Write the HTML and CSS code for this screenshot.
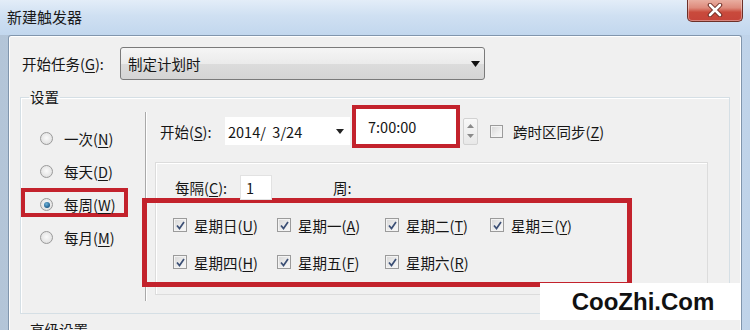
FILE: index.html
```html
<!DOCTYPE html>
<html lang="zh-CN">
<head>
<meta charset="utf-8">
<title>新建触发器</title>
<link rel="stylesheet" href="styles.css">
</head>
<body>
<div class="window">
  <div class="titlebar">
    <span class="title">新建触发器</span>
    <div class="close">
      <svg width="16" height="14" viewBox="0 0 16 14"><path d="M3 2 L13 12 M13 2 L3 12" stroke="#6b2a22" stroke-width="4.5" stroke-linecap="round"/><path d="M3 2 L13 12 M13 2 L3 12" stroke="#ffffff" stroke-width="2.6" stroke-linecap="round"/></svg>
    </div>
  </div>
  <div class="client">
    <div class="task-row">
      <span class="task-label">开始任务(<u>G</u>):</span>
      <div class="combo"><span>制定计划时</span><svg width="9" height="6" viewBox="0 0 9 6"><path d="M0 0 H9 L4.5 6 Z" fill="#111"/></svg></div>
    </div>
    <fieldset class="group">
      <legend>设置</legend>
      <div class="group-body">
        <div class="radios">
          <div class="radio-row"><span class="radio"></span><span>一次(<u>N</u>)</span></div>
          <div class="radio-row"><span class="radio"></span><span>每天(<u>D</u>)</span></div>
          <div class="radio-row hl"><span class="radio on"></span><span>每周(<u>W</u>)</span></div>
          <div class="radio-row"><span class="radio"></span><span>每月(<u>M</u>)</span></div>
        </div>
        <div class="divider"></div>
        <div class="settings">
          <div class="start-row">
            <span class="start-label">开始(<u>S</u>):</span>
            <div class="date-field"><span>2014/&nbsp;&nbsp;3/24</span><svg width="8" height="5" viewBox="0 0 8 5"><path d="M0 0 H8 L4 5 Z" fill="#222"/></svg></div>
            <div class="time-field">7:00:00</div>
            <div class="spin">
              <svg width="7" height="4" viewBox="0 0 7 4"><path d="M0 4 H7 L3.5 0 Z" fill="#8a8a8a"/></svg>
              <svg width="7" height="4" viewBox="0 0 7 4"><path d="M0 0 H7 L3.5 4 Z" fill="#8a8a8a"/></svg>
            </div>
            <span class="check"></span>
            <span class="sync-label">跨时区同步(<u>Z</u>)</span>
          </div>
          <div class="weekly">
            <div class="every-row">
              <span class="every-label">每隔(<u>C</u>):</span>
              <div class="num-field">1</div>
              <span class="week-unit">周:</span>
            </div>
            <div class="days">
              <div class="day"><span class="check on"><svg width="9" height="9" viewBox="0 0 9 9"><path d="M1 4.5 L3.5 7.5 L8 1" stroke="#3b4f75" stroke-width="1.7" fill="none"/></svg></span><span>星期日(<u>U</u>)</span></div>
              <div class="day"><span class="check on"><svg width="9" height="9" viewBox="0 0 9 9"><path d="M1 4.5 L3.5 7.5 L8 1" stroke="#3b4f75" stroke-width="1.7" fill="none"/></svg></span><span>星期一(<u>A</u>)</span></div>
              <div class="day"><span class="check on"><svg width="9" height="9" viewBox="0 0 9 9"><path d="M1 4.5 L3.5 7.5 L8 1" stroke="#3b4f75" stroke-width="1.7" fill="none"/></svg></span><span>星期二(<u>T</u>)</span></div>
              <div class="day"><span class="check on"><svg width="9" height="9" viewBox="0 0 9 9"><path d="M1 4.5 L3.5 7.5 L8 1" stroke="#3b4f75" stroke-width="1.7" fill="none"/></svg></span><span>星期三(<u>Y</u>)</span></div>
              <div class="day"><span class="check on"><svg width="9" height="9" viewBox="0 0 9 9"><path d="M1 4.5 L3.5 7.5 L8 1" stroke="#3b4f75" stroke-width="1.7" fill="none"/></svg></span><span>星期四(<u>H</u>)</span></div>
              <div class="day"><span class="check on"><svg width="9" height="9" viewBox="0 0 9 9"><path d="M1 4.5 L3.5 7.5 L8 1" stroke="#3b4f75" stroke-width="1.7" fill="none"/></svg></span><span>星期五(<u>F</u>)</span></div>
              <div class="day"><span class="check on"><svg width="9" height="9" viewBox="0 0 9 9"><path d="M1 4.5 L3.5 7.5 L8 1" stroke="#3b4f75" stroke-width="1.7" fill="none"/></svg></span><span>星期六(<u>R</u>)</span></div>
            </div>
          </div>
        </div>
      </div>
    </fieldset>
    <div class="advanced">高级设置</div>
  </div>
</div>
<div class="watermark">CooZhi.Com</div>
</body>
</html>
```

FILE: styles.css
```css
* { box-sizing: border-box; }
html, body {
  margin: 0;
  padding: 0;
  width: 750px;
  height: 330px;
  overflow: hidden;
}
body {
  font-family: "Noto Sans CJK SC", "Noto Sans", sans-serif;
  font-size: 14.5px;
  color: #161616;
  position: relative;
  background: #c4d7ec;
}
u { text-decoration: underline; text-underline-offset: 2px; }

.window {
  width: 750px;
  height: 330px;
  display: flex;
  flex-direction: column;
  background: linear-gradient(90deg, #b3c5d8 0%, #c9dcf0 40%, #d3e4f5 70%, #bfd3e9 100%);
}

.titlebar {
  height: 35px;
  flex: none;
  display: flex;
  justify-content: space-between;
  align-items: flex-start;
  padding-left: 7px;
  padding-right: 7px;
  background: linear-gradient(180deg, #e3edf8 0%, #cfe0f2 45%, #c2d7ee 100%);
}
.title {
  font-size: 15px;
  line-height: 18px;
  margin-top: 8px;
  color: #1a1a1a;
}
.close {
  width: 56px;
  height: 23px;
  margin-top: -1px;
  border: 1px solid #6d3028;
  border-top: none;
  border-radius: 0 0 5px 5px;
  background: linear-gradient(180deg, #eab2a5 0%, #de8b7c 40%, #c94a3c 60%, #c5443a 100%);
  display: flex;
  align-items: center;
  justify-content: center;
  box-shadow: inset 0 0 0 1px rgba(255,255,255,0.35);
}

.client {
  flex: 1;
  margin-left: 8px;
  margin-right: 8px;
  background: #f0f0f0;
  border: 1px solid #8196ad;
  border-bottom: none;
  border-radius: 3px 3px 0 0;
  box-shadow: inset 0 0 0 1px #ffffff;
  padding-top: 11px;
  display: flex;
  flex-direction: column;
}

.task-row {
  display: flex;
  align-items: center;
  padding-left: 13px;
  height: 33px;
}
.task-label {
  width: 98px;
  flex: none;
}
.combo {
  width: 365px;
  height: 33px;
  border: 1px solid #7a7a7a;
  border-radius: 3px;
  background: linear-gradient(180deg, #f5f5f5 0%, #ebebeb 50%, #dcdcdc 51%, #d4d4d4 100%);
  display: flex;
  align-items: center;
  justify-content: space-between;
  padding: 0 4px 0 7px;
}

.group {
  margin: 8px 11px 0 11px;
  padding: 0;
  border: 1px solid #d5dfe5;
  box-shadow: inset 1px 1px 0 #ffffff;
  min-width: 0;
}
.group legend {
  margin-left: 8px;
  padding: 0 1px;
  line-height: 18px;
  font-size: 14.5px;
}
.group-body {
  height: 207px;
  display: flex;
}

.radios {
  width: 124px;
  flex: none;
  display: flex;
  flex-direction: column;
  gap: 4px;
  padding-top: 16px;
}
.radio-row {
  width: 107px;
  height: 29px;
  padding-left: 19px;
  padding-top: 4px;
  display: flex;
  align-items: center;
  gap: 11px;
}
.radio-row.hl {
  box-shadow: inset 0 0 0 4px #c3222c;
}
.radio {
  width: 13px;
  height: 13px;
  flex: none;
  border-radius: 50%;
  border: 1px solid #9a9a9a;
  background: radial-gradient(circle at 50% 45%, #fafafa 0%, #e6e6e6 60%, #d4d4d4 100%);
  display: flex;
  align-items: center;
  justify-content: center;
}
.radio.on::after {
  content: "";
  width: 6px;
  height: 6px;
  border-radius: 50%;
  background: radial-gradient(circle at 40% 35%, #6fb2d8 0%, #1f5f8e 70%, #173e63 100%);
}

.divider {
  width: 2px;
  flex: none;
  margin: 6px 0 12px;
  border-left: 1px solid #a9a9a9;
  border-right: 1px solid #ffffff;
}

.settings {
  flex: 1;
  display: flex;
  flex-direction: column;
}

.start-row {
  height: 28px;
  margin-top: 11px;
  padding-left: 13px;
  display: flex;
  align-items: center;
}
.start-label {
  width: 65px;
  flex: none;
}
.date-field {
  width: 125px;
  height: 28px;
  flex: none;
  background: #ffffff;
  display: flex;
  align-items: center;
  justify-content: space-between;
  padding: 0 6px 0 3px;
}
.time-field {
  width: 108px;
  height: 43px;
  flex: none;
  margin-left: 2px;
  margin-bottom: 9px;
  border: 4px solid #c3222c;
  background: #ffffff;
  padding-left: 12px;
  display: flex;
  align-items: center;
}
.spin {
  width: 15px;
  height: 27px;
  flex: none;
  margin-left: 3px;
  border: 1px solid #d2d2d2;
  border-radius: 2px;
  background: linear-gradient(180deg, #f8f8f8, #e8e8e8);
  display: flex;
  flex-direction: column;
  align-items: center;
  justify-content: space-evenly;
}
.check {
  width: 14px;
  height: 14px;
  flex: none;
  border: 1px solid #9b9b9b;
  background: linear-gradient(135deg, #d6d6d6 0%, #eeeeee 60%, #f8f8f8 100%);
  box-shadow: inset 0 0 0 1px #f3f3f3;
  display: flex;
  align-items: center;
  justify-content: center;
}
.start-row .check {
  margin-left: 12px;
  width: 13px;
  height: 13px;
}
.sync-label {
  margin-left: 10px;
}

.weekly {
  width: 553px;
  height: 133px;
  margin-top: 17px;
  margin-left: 8px;
  border: 1px solid #dcdcdc;
  box-shadow: inset 1px 1px 0 #ffffff;
  padding: 12px 0 0 19px;
}
.every-row {
  height: 25px;
  display: flex;
  align-items: center;
}
.every-label {
  width: 65px;
  flex: none;
}
.num-field {
  width: 32px;
  height: 25px;
  background: #ffffff;
  border: 1px solid #e2e2e2;
  padding-left: 5px;
  display: flex;
  align-items: center;
}
.week-unit {
  margin-left: 61px;
}

.days {
  width: 490px;
  height: 89px;
  margin-top: -2px;
  margin-left: -33px;
  border: 5px solid #c3222c;
  padding: 10px 0 0 26px;
  display: grid;
  grid-template-columns: 104px 108px 105px 1fr;
  grid-auto-rows: 24px;
  row-gap: 13px;
}
.day {
  display: flex;
  align-items: center;
  gap: 7px;
}

.advanced {
  margin-top: 7px;
  padding-left: 21px;
  line-height: 18px;
}

.watermark {
  position: absolute;
  left: 540px;
  top: 283px;
  width: 200px;
  height: 37px;
  background: #ffffff;
  font-family: "Liberation Sans", Arial, sans-serif;
  font-weight: bold;
  font-size: 24px;
  color: #111111;
  display: flex;
  align-items: center;
  justify-content: center;
  padding-left: 6px;
}
```
